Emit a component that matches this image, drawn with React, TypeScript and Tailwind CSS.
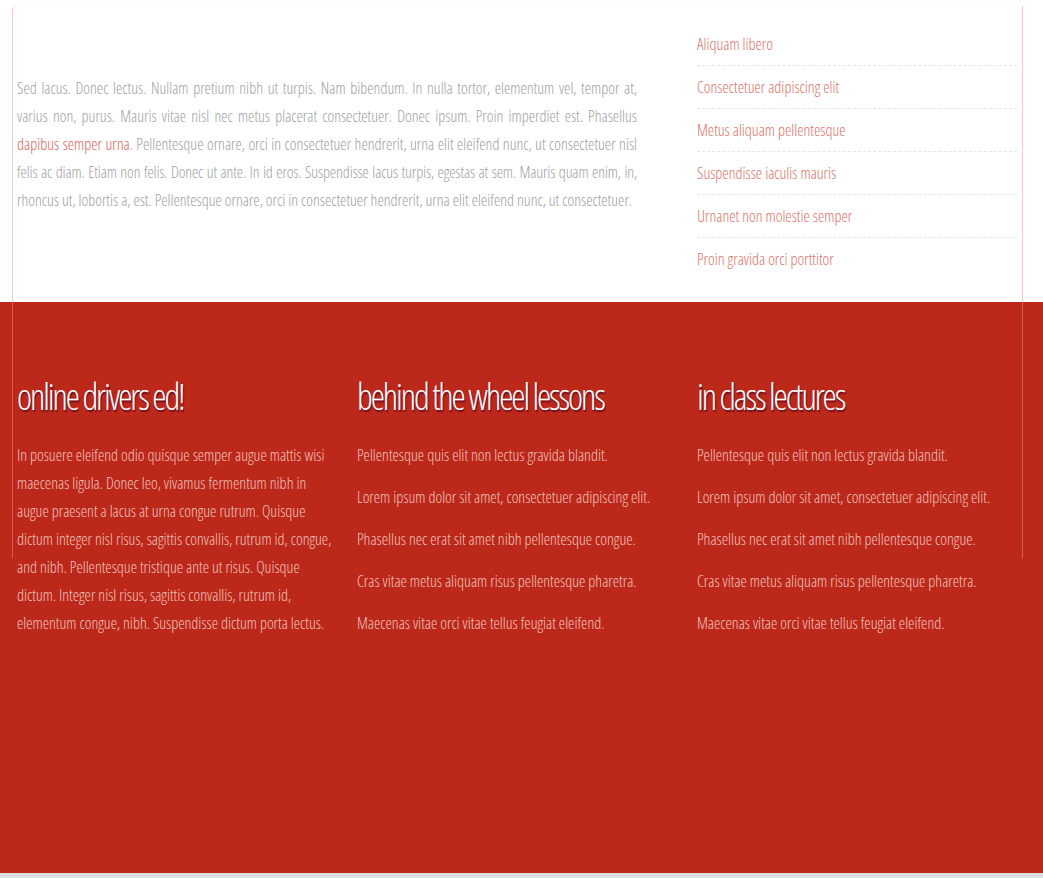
import React from 'react';

const links = [
  'Aliquam libero',
  'Consectetuer adipiscing elit',
  'Metus aliquam pellentesque',
  'Suspendisse iaculis mauris',
  'Urnanet non molestie semper',
  'Proin gravida orci porttitor',
];

const lines = [
  'Pellentesque quis elit non lectus gravida blandit.',
  'Lorem ipsum dolor sit amet, consectetuer adipiscing elit.',
  'Phasellus nec erat sit amet nibh pellentesque congue.',
  'Cras vitae metus aliquam risus pellentesque pharetra.',
  'Maecenas vitae orci vitae tellus feugiat eleifend.',
];

const Heading: React.FC<{ children: React.ReactNode }> = ({ children }) => (
  <h2 className="mb-6 text-[36px] leading-[40px] tracking-[-2.1px] text-white [text-shadow:1px_2px_1px_rgba(90,10,40,0.8)]">
    {children}
  </h2>
);

const LineList: React.FC = () => (
  <ul className="flex flex-col gap-[14px]">
    {lines.map((l) => (
      <li key={l}>{l}</li>
    ))}
  </ul>
);

export default function App() {
  return (
    <div className="relative min-h-[878px] bg-[#dddddd] font-['Open_Sans','Liberation_Sans_Narrow',sans-serif] font-light font-stretch-condensed text-[16px] leading-[28px]">
      {/* top */}
      <section className="h-[302px] bg-white">
        <div className="flex gap-[60px] pl-[17px]">
          <p className="w-[620px] pt-[74px] text-justify text-[#a0a0a0]">
            Sed lacus. Donec lectus. Nullam pretium nibh ut turpis. Nam bibendum. In nulla tortor, elementum vel,
            tempor at, varius non, purus. Mauris vitae nisl nec metus placerat consectetuer. Donec ipsum. Proin
            imperdiet est. Phasellus <a className="text-[#dc6358]">dapibus semper urna</a>. Pellentesque ornare, orci
            in consectetuer hendrerit, urna elit eleifend nunc, ut consectetuer nisl{' '}
            <span className="tracking-[-0.12px]">
              felis ac diam. Etiam non felis. Donec ut ante. In id eros. Suspendisse lacus turpis, egestas at sem.
              Mauris quam enim, in,
            </span>{' '}
            rhoncus ut, lobortis a, est. Pellentesque ornare, orci in consectetuer hendrerit, urna elit eleifend nunc,
            ut consectetuer.
          </p>
          <ul className="w-[320px] pt-[23px]">
            {links.map((l, i) => (
              <li
                key={l}
                className={`py-[7px] text-[#e07166] ${i < links.length - 1 ? 'border-b border-dashed border-[#e6e6e6]' : ''}`}
              >
                {l}
              </li>
            ))}
          </ul>
        </div>
      </section>

      {/* red */}
      <section className="h-[571px] bg-[#bc281a] text-[#f2c4bf]">
        <div className="grid grid-cols-[340px_340px_320px] pl-[17px] pt-[75px]">
          <div className="pr-5">
            <Heading>online drivers ed!</Heading>
            <p>
              In posuere eleifend odio quisque semper augue mattis wisi maecenas ligula. Donec leo, vivamus fermentum
              nibh in augue praesent a lacus at urna congue rutrum. Quisque dictum integer nisl risus, sagittis
              convallis, rutrum id, congue, and nibh. Pellentesque tristique ante ut risus. Quisque dictum. Integer nisl
              risus, sagittis convallis, rutrum id, elementum congue, nibh. Suspendisse dictum porta lectus.
            </p>
          </div>
          <div className="pr-5">
            <Heading>behind the wheel lessons</Heading>
            <LineList />
          </div>
          <div>
            <Heading>in class lectures</Heading>
            <LineList />
          </div>
        </div>
      </section>

      {/* frame overlay */}
      <div className="pointer-events-none absolute left-[12px] top-[5px] h-[553px] w-[1011px] rounded-tl-md border border-b-0 border-t-[rgba(235,150,140,0.06)] border-x-[rgba(235,150,140,0.5)]" />
    </div>
  );
}
